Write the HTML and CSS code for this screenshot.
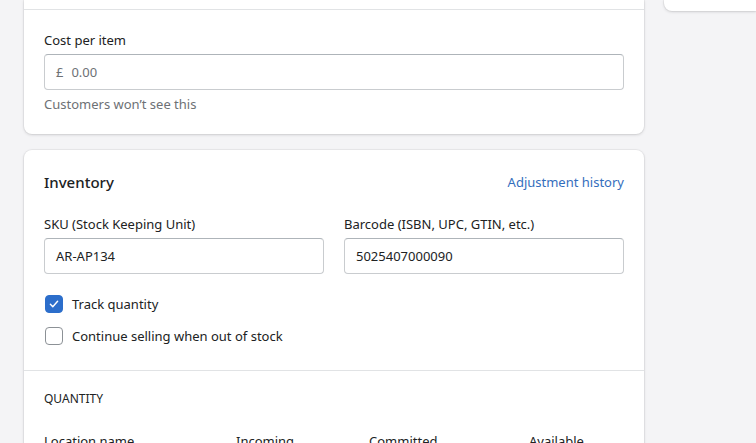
FILE: index.html
```html
<!DOCTYPE html>
<html lang="en">

<head>
    <meta charset="UTF-8" />
    <meta name="viewport" content="width=device-width, initial-scale=1.0" />
    <title>Product - Inventory</title>
    <link rel="stylesheet" href="styles.css">
</head>

<body>
    <div class="page">
        <div class="main-col">
            <!-- pricing card, top part scrolled out -->
            <div class="card">
                <div class="card-section top-cut"></div>
                <div class="card-section">
                    <label class="field-label">Cost per item</label>
                    <div class="text-field">
                        <span class="prefix">£</span>
                        <span class="placeholder">0.00</span>
                    </div>
                    <p class="help-text">Customers won’t see this</p>
                </div>
            </div>

            <!-- inventory card -->
            <div class="card">
                <div class="card-section">
                    <div class="card-header">
                        <h2>Inventory</h2>
                        <a href="#" class="link">Adjustment history</a>
                    </div>
                    <div class="field-row">
                        <div class="field">
                            <label class="field-label">SKU (Stock Keeping Unit)</label>
                            <div class="text-field"><span class="value">AR-AP134</span></div>
                        </div>
                        <div class="field">
                            <label class="field-label">Barcode (ISBN, UPC, GTIN, etc.)</label>
                            <div class="text-field"><span class="value">5025407000090</span></div>
                        </div>
                    </div>
                    <div class="checks">
                        <label class="check">
                            <span class="box checked">
                                <svg viewBox="0 0 20 20" width="12" height="12"><path d="M4 10.5l4 4 8-9" fill="none" stroke="#fff" stroke-width="2.4" stroke-linecap="round" stroke-linejoin="round"/></svg>
                            </span>
                            Track quantity
                        </label>
                        <label class="check">
                            <span class="box"></span>
                            Continue selling when out of stock
                        </label>
                    </div>
                </div>
                <div class="card-section">
                    <h3 class="subheading">QUANTITY</h3>
                    <div class="qty-head">
                        <span class="c-loc">Location name</span>
                        <span class="c-inc">Incoming</span>
                        <span class="c-com">Committed</span>
                        <span class="c-av">Available</span>
                    </div>
                </div>
            </div>
        </div>

        <div class="side-col">
            <div class="card side-card"></div>
        </div>
    </div>
</body>

</html>
```

FILE: styles.css
```css
body {
    margin: 0;
    padding: 0;
    background: #f4f4f6;
    font-family: "Noto Sans", "Open Sans", Arial, sans-serif;
    font-size: 13px;
    color: #202223;
    height: 443px;
    overflow: hidden;
}

.page {
    display: flex;
    gap: 20px;
    padding-left: 24px;
}

.main-col {
    width: 620px;
    display: flex;
    flex-direction: column;
    gap: 16px;
}

.side-col {
    flex: 1;
}

.card {
    background: #fff;
    border-radius: 0 0 8px 8px;
    box-shadow: 0 0 0 1px rgba(63, 63, 68, 0.05), 0 1px 3px rgba(63, 63, 68, 0.18);
}

.card + .card {
    border-radius: 8px;
}

.side-card {
    height: 11px;
    border-radius: 0 0 0 8px;
}

.card-section {
    padding: 20px;
}

.card-section + .card-section {
    border-top: 1px solid #e1e3e5;
}

.top-cut {
    height: 9px;
    padding: 0;
}

.field-label {
    display: block;
    line-height: 20px;
    margin-bottom: 4px;
}

.text-field {
    height: 34px;
    border: 1px solid #c9cccf;
    border-top-color: #aeb4b9;
    border-radius: 4px;
    display: flex;
    align-items: center;
    padding: 0 11px;
    gap: 8px;
}

.prefix,
.placeholder {
    color: #6d7175;
}

.help-text {
    margin: 4px 0 0;
    color: #6d7175;
    line-height: 20px;
}

.card-header {
    display: flex;
    justify-content: space-between;
    align-items: center;
    margin-bottom: 20px;
}

.card-header h2 {
    margin: 0;
    font-size: 15px;
    font-weight: 500;
    line-height: 24px;
}

.link {
    color: #346ebd;
    text-decoration: none;
}

.field-row {
    display: flex;
    gap: 20px;
}

.field {
    flex: 1;
}

.checks {
    margin: 20px 0 4px;
    display: flex;
    flex-direction: column;
    gap: 12px;
}

.check {
    display: flex;
    align-items: center;
    gap: 9px;
    line-height: 20px;
}

.box {
    width: 16px;
    height: 16px;
    border: 1px solid #8c9196;
    border-radius: 4px;
    display: flex;
    align-items: center;
    justify-content: center;
    margin-left: 1px;
}

.box.checked {
    background: #2c6ecb;
    border-color: #2c6ecb;
}

.subheading {
    margin: 0;
    font-size: 12px;
    font-weight: 400;
    line-height: 16px;
}

.qty-head {
    display: flex;
    margin-top: 24px;
    line-height: 20px;
}

.c-loc { width: 192px; }
.c-inc { width: 133px; }
.c-com { width: 160px; }
```
